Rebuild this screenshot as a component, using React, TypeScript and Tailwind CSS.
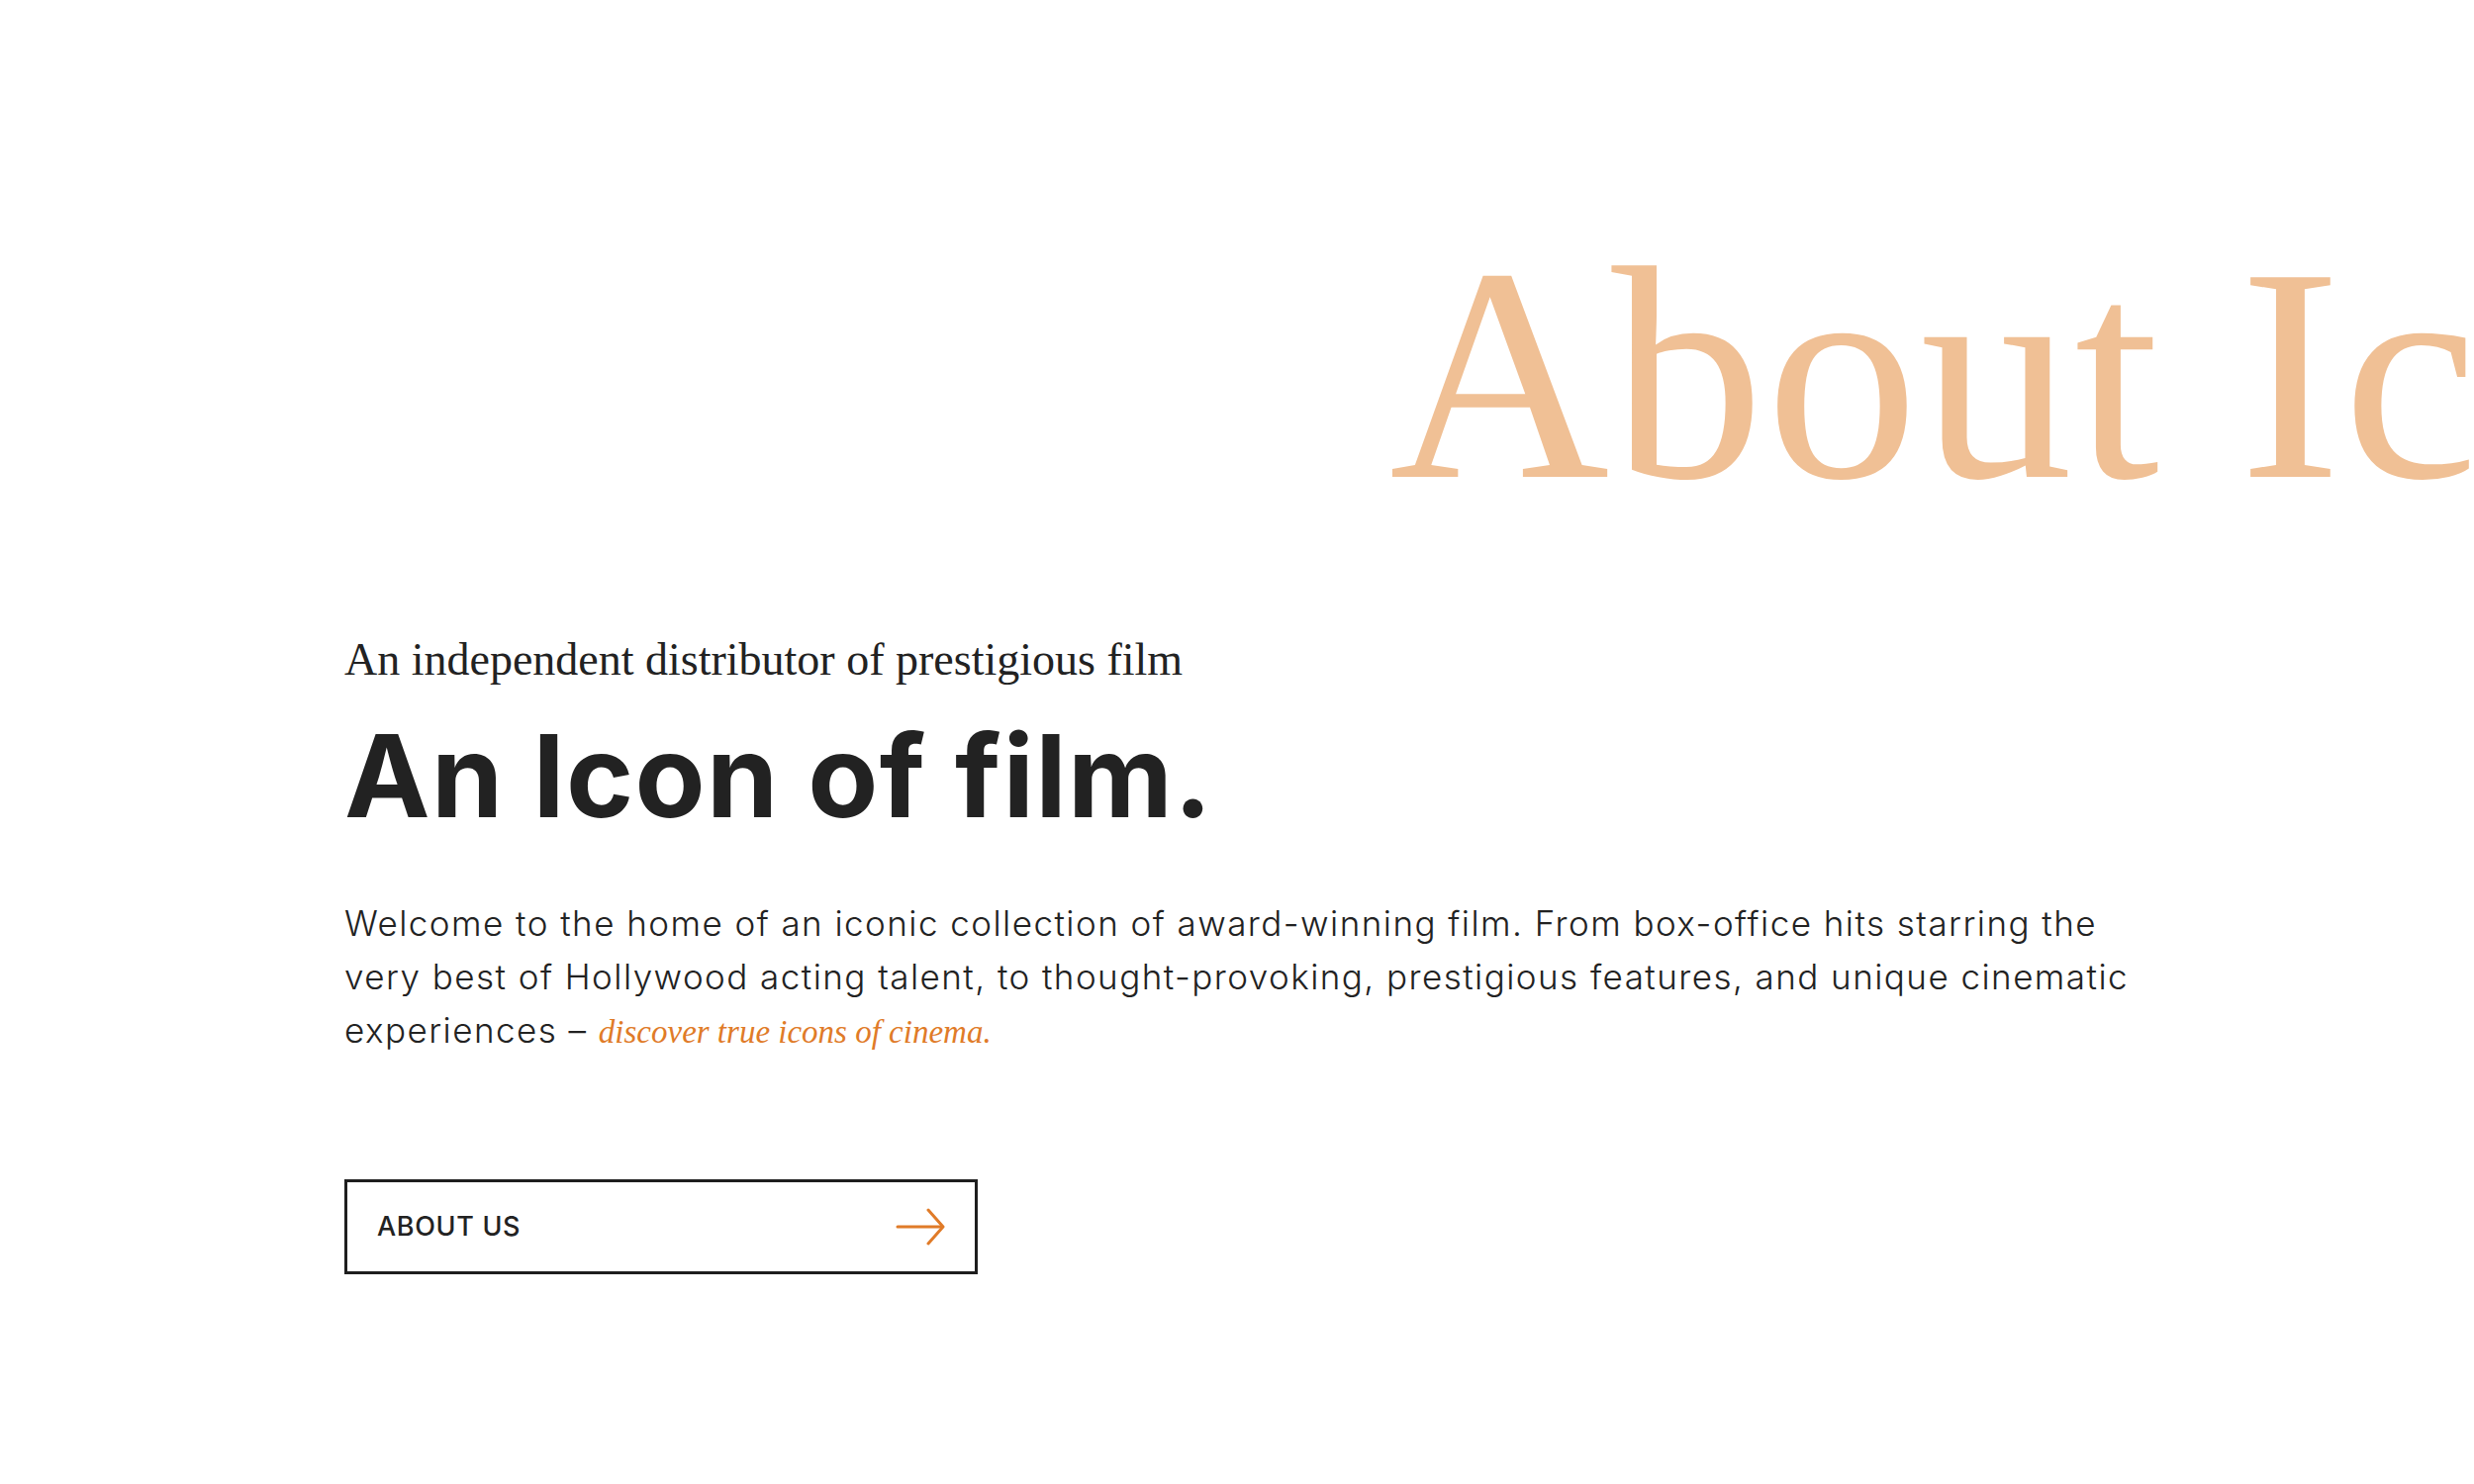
export default function App() {
  return (
    <main className="min-h-screen w-full bg-white overflow-hidden">
      <div className="pt-[225px] pl-[1404px] whitespace-nowrap">
        <h1 className="font-['Liberation_Serif',serif] text-[308px] leading-none tracking-[2px] text-[#f0c095]">
          About Icon
        </h1>
      </div>

      <section className="pl-[348px] pt-[111px]">
        <p className="font-['Liberation_Serif',serif] text-[46px] leading-none text-[#222]">
          An independent distributor of prestigious film
        </p>
        <h2 className="mt-[36px] font-['Inter',sans-serif] font-bold text-[116px] leading-none tracking-[1.3px] text-[#222]">
          An Icon of film.
        </h2>
        <p className="mt-[64px] font-['Inter',sans-serif] font-light text-[35px] leading-[54px] tracking-[1.45px] text-[#222]">
          Welcome to the home of an iconic collection of award-winning film. From box-office hits starring the
          <br />
          very best of Hollywood acting talent, to thought-provoking, prestigious features, and unique cinematic
          <br />
          experiences –{" "}
          <em className="font-['Liberation_Serif',serif] text-[33px] tracking-normal text-[#e07b28]">
            discover true icons of cinema.
          </em>
        </p>

        <a
          href="#"
          className="mt-[122px] flex w-[640px] h-[96px] items-center justify-between border-[3px] border-[#1e1e1e] pl-[30px] pr-[30px]"
        >
          <span className="font-['Inter',sans-serif] text-[27px] font-medium tracking-wide text-[#222]">ABOUT US</span>
          <svg width="50" height="38" viewBox="0 0 50 38" fill="none" stroke="#e07b28" strokeWidth="3" strokeLinecap="round" strokeLinejoin="round">
            <path d="M2 19H47" />
            <path d="M33 2L48 19L33 36" />
          </svg>
        </a>
      </section>
    </main>
  );
}
